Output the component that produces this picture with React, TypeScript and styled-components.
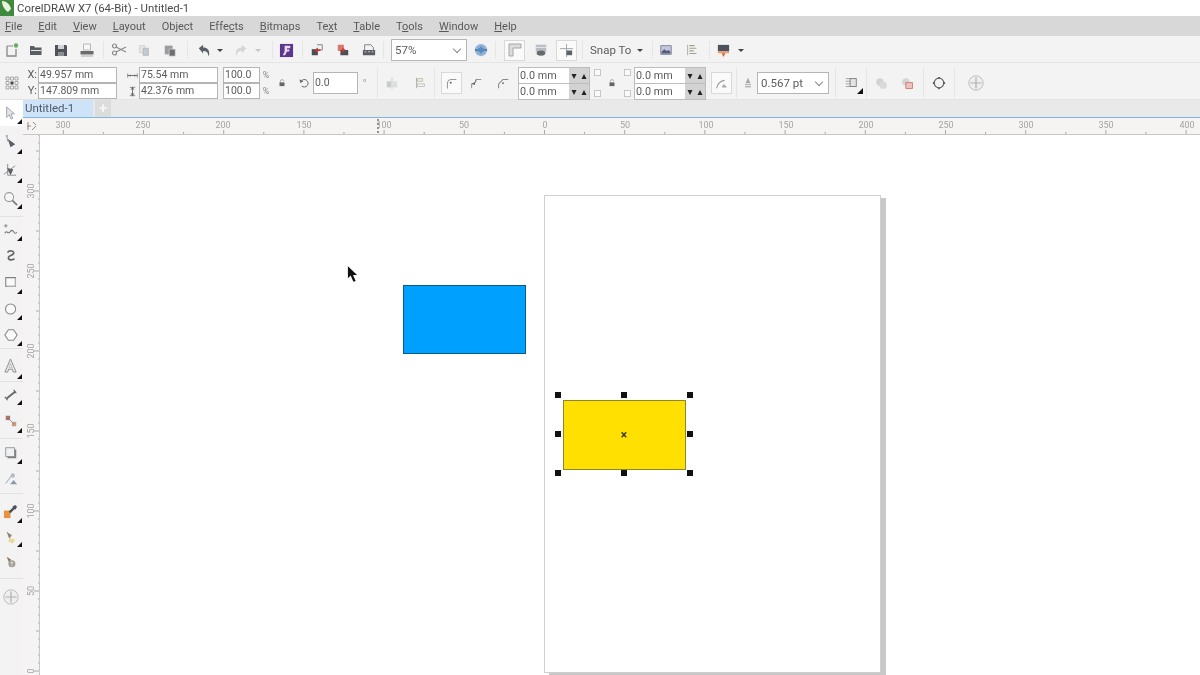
import React from 'react'
import styled, { createGlobalStyle } from 'styled-components'

const GlobalStyle = createGlobalStyle`
  html, body { margin: 0; padding: 0; background: #fff; }
  body { font-family: Roboto, "Noto Sans", "Liberation Sans", sans-serif; overflow: hidden; }
`

type IconProps = { children: React.ReactNode; s?: number }
const Ico = ({ children, s = 16 }: IconProps) => (
  <svg width={s} height={s} viewBox="0 0 16 16" fill="none">{children}</svg>
)

const icons: Record<string, React.ReactNode> = {
  new: <><path d="M3 4v10h9V7" stroke="#888" strokeWidth="1.3" /><path d="M3 4h6" stroke="#888" /><circle cx="12" cy="3.5" r="2.2" fill="#6bab66" /></>,
  open: <><path d="M2 4h4l1 1.5h6.500V13H2z" fill="#5a5d63" /><path d="M3 8h10v1H3z" fill="#e8e8e8" /></>,
  save: <><path d="M2 3h11l1 1v10H2z" fill="#50535a" /><path d="M5 3h6v4H5z" fill="#cfd3d8" /><path d="M5 10h6v4H5z" fill="#8b8f96" /></>,
  print: <><path d="M4.500 2h7v6h-7z" fill="#f7f7f7" stroke="#aaa" strokeWidth=".8" /><path d="M1.500 9h13v3.500h-13z" fill="#6a6a6c" /><path d="M2 14h12" stroke="#aaa" /></>,
  cut: <><circle cx="3.500" cy="4" r="2" stroke="#8a8a8a" strokeWidth="1.200" /><circle cx="3.500" cy="11" r="2" stroke="#8a8a8a" strokeWidth="1.200" /><path d="M5 5l10 5M5 10l10-5" stroke="#8a8a8a" strokeWidth="1.200" /></>,
  copy: <><path d="M3 3h6v8H3z" fill="#e7e7e7" stroke="#cfcfcf" /><path d="M7 6h6v8H7z" fill="#c4cbd0" stroke="#b0b6bb" /></>,
  paste: <><path d="M2 3h9v10H2z" fill="#9c9c9c" /><path d="M7 7h7v8H7z" fill="#6c6e72" stroke="#ddd" strokeWidth=".8" /></>,
  undo: <path d="M2 6l5-4v3c4 0 7 2 7 7 0 2-1 3-1 3 0-4-2-6-6-6v3z" fill="#5c6066" />,
  redo: <path d="M14 6L9 2v3C5 5 2 7 2 12c0 2 1 3 1 3 0-4 2-6 6-6v3z" fill="#d5d7da" />,
  connect: <><path d="M1 1h14v14H1z" fill="#5b368f" /><path d="M6 3h6v2.500H8.500V7H11v2H8.500l-2 4H4l2-4z" fill="#f0d9e6" /></>,
  importDoc: <><path d="M2 7h7v7H2z" fill="#4b4f55" /><path d="M8 2h6v6H8" stroke="#777" /><path d="M5 8l4-3v2h3v2H9v2z" fill="#c9392f" /></>,
  exportDoc: <><path d="M2 2h7v7H2z" fill="#d9776d" /><path d="M5 8h9v6H5z" fill="#4b4f55" /><path d="M7 5l4 3-4 3z" fill="#d9352b" /></>,
  pdf: <><path d="M3 2h7l3 3v4H3z" fill="#f2f2f2" stroke="#777" /><path d="M1 8h14v6H1z" fill="#5a5e64" /><path d="M3 10h2M7 10h2M11 10h2" stroke="#ddd" /></>,
  launcher: <><circle cx="8" cy="8" r="7" fill="#8fb4d8" /><path d="M1 8h14" stroke="#39659a" strokeWidth="1.400" /><path d="M8 4v8" stroke="#39659a" /><rect x="5" y="5.500" width="6" height="5" fill="#5b8cc0" /></>,
  rulers: <><path d="M2 2h12v4H6v8H2z" fill="#dcdcdc" stroke="#a5a5a5" /></>,
  page: <><path d="M2 2h12v8H2z" fill="#b8bcc3" /><path d="M2 5h12" stroke="#eee" /><ellipse cx="8" cy="11.500" rx="5" ry="3" fill="#66696d" /></>,
  guides: <><path d="M8 1v14M1 6h14" stroke="#9da4aa" /><rect x="8" y="8" width="6" height="5" fill="#5e6369" /></>,
  screen: <><path d="M2 3h12v10H2z" fill="#c4c6dd" stroke="#7b7f96" /><path d="M3 10l3-3 3 2 2-1 2 2v2H3z" fill="#565b78" /></>,
  list: <><path d="M3 2v12" stroke="#a5a5a5" /><path d="M5 3h6M5 6h8M5 9h5M5 12h8" stroke="#9aa488" strokeWidth="1.300" /></>,
  monitor: <><path d="M2 2h12v7H2z" fill="#4e5159" /><path d="M2 9h12v2H2z" fill="#e9a06e" /><path d="M6 11h4l-2 4z" fill="#d8622c" /></>,
  position: <><path d="M2 2h3v3H2zM6.500 2h3v3h-3zM11 2h3v3h-3zM2 6.500h3v3H2zM11 6.500h3v3h-3zM2 11h3v3H2zM6.500 11h3v3h-3zM11 11h3v3h-3z" stroke="#a0a0a0" strokeWidth=".9" /><rect x="6.500" y="6.500" width="3" height="3" fill="#444" /></>,
  sizeW: <><path d="M1 8h14" stroke="#666" strokeWidth="1.300" /><path d="M1 5v6M15 5v6" stroke="#666" /><path d="M3 8l2-2v4zM13 8l-2-2v4z" fill="#666" /></>,
  sizeH: <><path d="M8 1v14" stroke="#666" strokeWidth="1.300" /><path d="M4 2h8M4 14h8" stroke="#666" /><path d="M8 2l3 3H5zM8 14l3-3H5z" fill="#666" /></>,
  lock: <><path d="M4 7h8v6H4z" fill="#666" /><path d="M5.500 7V5a2.500 2.500 0 0 1 5 0" stroke="#888" /></>,
  rotate: <><path d="M4 6a5 5 0 1 1 1 6" stroke="#666" strokeWidth="1.300" /><path d="M2 3l1 5 4-2z" fill="#666" /></>,
  mirrorH: <><path d="M2 6h5v7H2z" fill="#c9cdc9" /><path d="M9 6h5v7H9z" fill="#dcdfdc" /><path d="M8 2v13" stroke="#c8c8c8" /></>,
  mirrorV: <><path d="M4 2v12" stroke="#aaa" /><path d="M5 3h6v3H5z" stroke="#b2baa6" /><path d="M5 9h8v3H5z" stroke="#bcbcbc" /></>,
  cornerRound: <><path d="M3 14V8a5 5 0 0 1 5-5h6" stroke="#999" strokeWidth="1.300" /><rect x="6" y="6" width="2" height="2" fill="#555" /></>,
  cornerScallop: <><path d="M3 14V9M8 4h6" stroke="#888" /><path d="M3 9a5 5 0 0 0 5-5" stroke="#666" strokeWidth="1.300" /><circle cx="6" cy="9" r="1" fill="#555" /></>,
  cornerChamfer: <><path d="M3 14V9l5-5h6" stroke="#888" strokeWidth="1.200" /><circle cx="8" cy="8" r="1" fill="#555" /></>,
  cornerScale: <><path d="M2 14a10 10 0 0 1 9-9" stroke="#999" strokeWidth="1.400" /><path d="M8 12l2-3 4 4H8z" fill="#aaa" /></>,
  pen: <><path d="M8 1l3 7H5z" fill="#a5a5a5" /><path d="M4 9h8v2H4zM4 12h8v2H4z" fill="#bbb" /></>,
  textWrap: <><path d="M2 3h5M2 6h5M2 9h5M2 12h5" stroke="#999" /><rect x="7" y="3" width="7" height="9" fill="#e4e4e4" stroke="#777" /></>,
  backFront: <><circle cx="6" cy="6" r="4.500" fill="#d3d3d3" /><circle cx="10" cy="10" r="4.500" fill="#d9d9d9" /></>,
  trim: <><circle cx="6" cy="6" r="4.500" fill="#d5d5d5" /><rect x="6" y="7" width="8" height="7" fill="#eec4c0" stroke="#cc6a60" /></>,
  outline: <><circle cx="8" cy="8" r="5.500" stroke="#666" strokeWidth="1.400" /><path d="M8 1v2M8 13v2M1 8h2M13 8h2" stroke="#444" strokeWidth="1.600" /></>,
  plus: <><circle cx="8" cy="8" r="7.200" fill="#eee" stroke="#b9b9b9" strokeWidth=".9" /><path d="M8 2.500v11M2.500 8h11" stroke="#b0b0b0" strokeWidth="1.200" /></>,
  pick: <path d="M3 1l9 8H8l2 5-2 1-2-5-3 3z" fill="#e4e6e8" stroke="#9aa0a8" />,
  shape: <><path d="M4 1l1 7" stroke="#999" /><path d="M5 5l8 6-5 3z" fill="#5a5e66" /><circle cx="4" cy="2" r="1" fill="#999" /></>,
  crop: <><path d="M1 12L13 3" stroke="#80858b" /><path d="M4 5l7 2-3 6z" fill="#5a5e64" /><path d="M5 1v12h9" stroke="#888" /></>,
  zoom: <><circle cx="6.500" cy="6.500" r="4.800" fill="#f6f6f6" stroke="#9d9d9d" strokeWidth="1.200" /><path d="M10 10l5 5" stroke="#7a7a7a" strokeWidth="1.800" /></>,
  freehand: <><path d="M3 1v4M1 3h4" stroke="#888" /><path d="M2 11c2-4 3 1 5-1s2-3 4-1 1 3 4 1" stroke="#777" strokeWidth="1.200" /></>,
  artistic: <path d="M4 4c2-3 8-2 7 1s-6 2-6 5 5 3 7 1" stroke="#666" strokeWidth="1.900" />,
  rect: <><path d="M2 3h11v10H2z" fill="#fafafa" stroke="#808080" strokeWidth="1.200" /><path d="M3 13h10V4" stroke="#bbb" /></>,
  ellipse: <><circle cx="7.500" cy="8" r="5.800" fill="#fafafa" stroke="#888" strokeWidth="1.200" /></>,
  polygon: <path d="M5 2h6l4 6-4 6H5L1 8z" fill="#fafafa" stroke="#888" strokeWidth="1.200" />,
  textA: <><path d="M8 1l6 14h-3l-1-3H6l-1 3H2z" fill="#e9e9e9" stroke="#8b8b8b" /><path d="M6.500 10h3L8 6z" fill="#fff" stroke="#999" strokeWidth=".6" /></>,
  dimension: <><path d="M3 12L13 4" stroke="#666" strokeWidth="2" /><path d="M1 10l3 4M11 2l3 4" stroke="#666" strokeWidth="1.400" /></>,
  connector: <><rect x="2" y="2" width="5" height="5" fill="#a8746a" /><rect x="9" y="9" width="5" height="5" fill="#c69a7c" /><path d="M6 6l5 5" stroke="#888" /></>,
  shadow: <><rect x="4" y="4" width="10" height="10" fill="#7f7f7f" /><rect x="2" y="2" width="10" height="10" fill="#eef0f2" stroke="#909090" /></>,
  transparency: <><path d="M2 13l7-9" stroke="#8a9aa8" /><circle cx="10" cy="4" r="2.500" fill="#b6bcc2" /><path d="M11 9l4 5H7z" fill="#8d9aa6" /></>,
  eyedropper: <><rect x="1" y="7" width="7" height="8" fill="#e8923e" /><path d="M7 9l6-6" stroke="#4c5056" strokeWidth="2.500" /><path d="M10 3l3 3 2-3-2-2z" fill="#4c5056" /></>,
  fill: <><path d="M3 2l6 4-3 4z" fill="#8e8578" /><path d="M6 9l7 2-3 4-5-2z" fill="#e9d893" /></>,
  smartFill: <><path d="M3 2l5 3-2 4z" fill="#8d7560" /><circle cx="9" cy="10" r="4" fill="#a39a90" /><path d="M7 9h4M9 7v6" stroke="#ddd" /></>,
}

const App = () => (
  <Screen>
    <GlobalStyle />
    <TitleBar>
      <Logo viewBox="0 0 14 16">
        <path d="M0 0h14v16H0z" fill="#3f8a3c" />
        <path d="M2 1c4 0 8 3 9 8l-3 3C5 10 2 6 2 1z" fill="#e9f3df" />
      </Logo>
      CorelDRAW X7 (64-Bit) - Untitled-1
    </TitleBar>

    <MenuBar>
      <MenuItem><u>F</u>ile</MenuItem>
      <MenuItem><u>E</u>dit</MenuItem>
      <MenuItem><u>V</u>iew</MenuItem>
      <MenuItem><u>L</u>ayout</MenuItem>
      <MenuItem>Ob<u>j</u>ect</MenuItem>
      <MenuItem>Effe<u>c</u>ts</MenuItem>
      <MenuItem><u>B</u>itmaps</MenuItem>
      <MenuItem>Te<u>x</u>t</MenuItem>
      <MenuItem><u>T</u>able</MenuItem>
      <MenuItem>T<u>o</u>ols</MenuItem>
      <MenuItem><u>W</u>indow</MenuItem>
      <MenuItem><u>H</u>elp</MenuItem>
    </MenuBar>

    <StandardBar>
      <Cell $w={23}><Ico>{icons.new}</Ico></Cell>
      <Cell $w={25}><Ico>{icons.open}</Ico></Cell>
      <Cell $w={25}><Ico>{icons.save}</Ico></Cell>
      <Cell $w={27}><Ico>{icons.print}</Ico></Cell>
      <Sep $l={3} $r={3} />
      <Cell $w={24}><Ico>{icons.cut}</Ico></Cell>
      <Cell $w={26}><Ico s={14}>{icons.copy}</Ico></Cell>
      <Cell $w={26}><Ico s={14}>{icons.paste}</Ico></Cell>
      <Sep $l={4} $r={4} />
      <Cell $w={24}><Ico s={14}>{icons.undo}</Ico></Cell>
      <Caret />
      <Cell $w={26} $l={4}><Ico s={14}>{icons.redo}</Ico></Cell>
      <Caret $light />
      <Sep $l={10} $r={2} />
      <Cell $w={22}><Ico s={15}>{icons.connect}</Ico></Cell>
      <Sep $l={5} $r={2} />
      <Cell $w={24}><Ico s={14}>{icons.importDoc}</Ico></Cell>
      <Cell $w={27}><Ico s={14}>{icons.exportDoc}</Ico></Cell>
      <Cell $w={26}><Ico s={14}>{icons.pdf}</Ico></Cell>
      <Sep $l={1} $r={7} />
      <Select $w={76}>57%<Chevron /></Select>
      <Cell $w={28}><Ico s={14}>{icons.launcher}</Ico></Cell>
      <Sep $l={0} $r={8} />
      <Toggle><Ico>{icons.rulers}</Ico></Toggle>
      <Cell $w={31}><Ico s={14}>{icons.page}</Ico></Cell>
      <Toggle><Ico s={15}>{icons.guides}</Ico></Toggle>
      <Sep $l={5} $r={7} />
      <SnapLabel>Snap To</SnapLabel>
      <Cell $w={20}><Caret /></Cell>
      <Sep $l={2} $r={0} />
      <Cell $w={26}><Ico s={14}>{icons.screen}</Ico></Cell>
      <Cell $w={26}><Ico s={14}>{icons.list}</Ico></Cell>
      <Sep $l={4} $r={0} />
      <Cell $w={27}><Ico s={15}>{icons.monitor}</Ico></Cell>
      <Caret />
    </StandardBar>

    <PropertyBar>
      <Cell $w={23}><Ico>{icons.position}</Ico></Cell>
      <AxisColumn><span>X:</span><span>Y:</span></AxisColumn>
      <FieldStack $w={79}>
        <Field>49.957 mm</Field>
        <Field>147.809 mm</Field>
      </FieldStack>
      <SizeIcons>
        <Ico s={11}>{icons.sizeW}</Ico>
        <Ico s={11}>{icons.sizeH}</Ico>
      </SizeIcons>
      <FieldStack $w={79}>
        <Field>75.54 mm</Field>
        <Field>42.376 mm</Field>
      </FieldStack>
      <FieldStack $w={37} $l={5}>
        <Field>100.0</Field>
        <Field>100.0</Field>
      </FieldStack>
      <Unit><span>%</span><span>%</span></Unit>
      <Cell $w={20}><Ico s={10}>{icons.lock}</Ico></Cell>
      <Cell $w={18} $l={3}><Ico s={12}>{icons.rotate}</Ico></Cell>
      <SingleField $w={45}>0.0</SingleField>
      <Degree>°</Degree>
      <Sep $l={6} $r={1} $tall />
      <Cell $w={26}><Ico s={14}>{icons.mirrorH}</Ico></Cell>
      <Cell $w={29}><Ico s={14}>{icons.mirrorV}</Ico></Cell>
      <Sep $l={0} $r={6} $tall />
      <Toggle $h={22}><Ico s={13}>{icons.cornerRound}</Ico></Toggle>
      <Cell $w={28}><Ico s={14}>{icons.cornerScallop}</Ico></Cell>
      <Cell $w={26}><Ico s={14}>{icons.cornerChamfer}</Ico></Cell>
      <SpinnerGroup $l={2}>
        <SpinnerRow>0.0 mm<Spin>▾</Spin><Spin>▴</Spin></SpinnerRow>
        <SpinnerRow>0.0 mm<Spin>▾</Spin><Spin>▴</Spin></SpinnerRow>
      </SpinnerGroup>
      <CornerMarks><Mark /><Mark /></CornerMarks>
      <Cell $w={16}><Ico s={10}>{icons.lock}</Ico></Cell>
      <CornerMarks><Mark /><Mark /></CornerMarks>
      <SpinnerGroup>
        <SpinnerRow>0.0 mm<Spin>▾</Spin><Spin>▴</Spin></SpinnerRow>
        <SpinnerRow>0.0 mm<Spin>▾</Spin><Spin>▴</Spin></SpinnerRow>
      </SpinnerGroup>
      <Toggle $h={22} $l={5}><Ico s={14}>{icons.cornerScale}</Ico></Toggle>
      <Sep $l={4} $r={2} $tall />
      <Cell $w={18}><Ico s={12}>{icons.pen}</Ico></Cell>
      <Select $w={72} $h={22}>0.567 pt<Chevron /></Select>
      <Sep $l={6} $r={2} $tall />
      <Cell $w={26}><Flyout><Ico s={14}>{icons.textWrap}</Ico></Flyout></Cell>
      <Sep $l={2} $r={2} $tall />
      <Cell $w={25}><Ico s={13}>{icons.backFront}</Ico></Cell>
      <Cell $w={27}><Ico s={13}>{icons.trim}</Ico></Cell>
      <Sep $l={2} $r={0} $tall />
      <Cell $w={30}><Ico s={14}>{icons.outline}</Ico></Cell>
      <Sep $l={0} $r={0} $tall />
      <Cell $w={41}><Ico>{icons.plus}</Ico></Cell>
    </PropertyBar>

    <Main>
      <Toolbox>
        <Tool $h={26} $active $flyout><Ico s={14}>{icons.pick}</Ico></Tool>
        <Tool $h={30} $flyout><Ico s={15}>{icons.shape}</Ico></Tool>
        <Tool $h={29} $flyout><Ico s={15}>{icons.crop}</Ico></Tool>
        <Tool $h={26} $flyout><Ico s={15}>{icons.zoom}</Ico></Tool>
        <ToolSep $t={5} />
        <Tool $h={26} $flyout><Ico s={15}>{icons.freehand}</Ico></Tool>
        <Tool $h={25}><Ico s={14}>{icons.artistic}</Ico></Tool>
        <Tool $h={28} $flyout><Ico s={14}>{icons.rect}</Ico></Tool>
        <Tool $h={26} $flyout><Ico s={14}>{icons.ellipse}</Ico></Tool>
        <Tool $h={26} $flyout><Ico s={14}>{icons.polygon}</Ico></Tool>
        <ToolSep />
        <Tool $h={32} $flyout><Ico s={15}>{icons.textA}</Ico></Tool>
        <ToolSep />
        <Tool $h={25} $flyout><Ico s={14}>{icons.dimension}</Ico></Tool>
        <Tool $h={28} $flyout><Ico s={14}>{icons.connector}</Ico></Tool>
        <ToolSep $t={3} />
        <Tool $h={27} $flyout><Ico s={14}>{icons.shadow}</Ico></Tool>
        <Tool $h={26}><Ico s={14}>{icons.transparency}</Ico></Tool>
        <ToolSep $t={1} />
        <Tool $h={28} $t={3} $flyout><Ico s={15}>{icons.eyedropper}</Ico></Tool>
        <Tool $h={24} $flyout><Ico s={14}>{icons.fill}</Ico></Tool>
        <Tool $h={26}><Ico s={14}>{icons.smartFill}</Ico></Tool>
        <ToolSep $t={3} />
        <Tool $h={36}><Ico>{icons.plus}</Ico></Tool>
      </Toolbox>

      <Workspace>
        <DocTabs>
          <DocTab>Untitled-1</DocTab>
          <AddTab>+</AddTab>
        </DocTabs>
        <TopRuler>
          <RulerCorner>
            <svg width="10" height="10" viewBox="0 0 10 10">
              <path d="M1 1v8M0 5h4M6 1l3 3M5 9l4-4" stroke="#8a8a8a" fill="none" />
            </svg>
          </RulerCorner>
          <HorizontalScale />
        </TopRuler>
        <CanvasRow>
          <VerticalScale />
          <Canvas>
            <Pointer viewBox="0 0 12 18">
              <path d="M1 0v13l3-3 3 7 2.500-1-3-6.500h4.500z" fill="#111" />
            </Pointer>
            <Page />
            <BlueShape />
            <Selection>
              <Handle $x={0} $y={0} />
              <Handle $x={66} $y={0} />
              <Handle $x={132} $y={0} />
              <Handle $x={0} $y={39} />
              <Handle $x={132} $y={39} />
              <Handle $x={0} $y={78} />
              <Handle $x={66} $y={78} />
              <Handle $x={132} $y={78} />
              <YellowShape />
              <CenterMark>×</CenterMark>
            </Selection>
          </Canvas>
        </CanvasRow>
      </Workspace>
    </Main>
  </Screen>
)

// ruler drawings, x and y are in page pixels so they line up with the labels
const hLabels = [[-300, 63], [-250, 143], [-200, 223], [-150, 304], [-100, 384], [-50, 464], [0, 545], [50, 625], [100, 706], [150, 786], [200, 866], [250, 946], [300, 1026], [350, 1106], [400, 1187]]
const vLabels = [[300, 191], [250, 271], [200, 351], [150, 431], [100, 511], [50, 591], [0, 671]]

const HorizontalScale = () => {
  const ticks: React.ReactNode[] = []
  for (let i = -6; i < 160; i++) {
    const x = 63.300 + i * 8.020
    const len = i % 10 === 0 ? 5 : i % 5 === 0 ? 3 : 1
    ticks.push(<path key={i} d={`M${x} 17V${17 - len}`} stroke="#a9a9a9" />)
  }
  return (
    <ScaleSvg width="1160" height="17" viewBox="40 0 1160 17">
      {ticks}
      <path d="M378 1V17" stroke="#333" strokeDasharray="2 2" />
      {hLabels.map(([n, x]) => (
        <text key={n} x={x} y="10" textAnchor="middle" fontSize="9" fill="#a3a3a3">{Math.abs(n)}</text>
      ))}
    </ScaleSvg>
  )
}

const VerticalScale = () => {
  const ticks: React.ReactNode[] = []
  for (let i = -8; i < 70; i++) {
    const y = 191 + i * 8 - 135
    const len = i % 10 === 0 ? 5 : i % 5 === 0 ? 3 : 1
    ticks.push(<path key={i} d={`M16 ${y}H${16 - len}`} stroke="#a9a9a9" />)
  }
  return (
    <VerticalRuler>
      <ScaleSvg width="17" height="540" viewBox="0 0 17 540">
        {ticks}
        {vLabels.map(([n, y]) => (
          <text key={n} transform={`translate(11 ${y - 135}) rotate(-90)`} textAnchor="middle" fontSize="9" fill="#a3a3a3">{n}</text>
        ))}
      </ScaleSvg>
    </VerticalRuler>
  )
}

const Screen = styled.div`
  width: 1200px;
  height: 675px;
  display: flex;
  flex-direction: column;
  overflow: hidden;
  background: #fff;
  color: #5c5c5c;
  filter: blur(0.45px);
`

const TitleBar = styled.div`
  height: 16px;
  display: flex;
  align-items: center;
  gap: 3px;
  background: #fff;
  font-size: 11.4px;
  color: #4a4a4a;
  flex: none;
`

const Logo = styled.svg`
  width: 14px;
  height: 16px;
`

const MenuBar = styled.div`
  height: 20px;
  flex: none;
  box-sizing: border-box;
  display: flex;
  align-items: center;
  gap: 16px;
  padding: 1px 0 0 5px;
  background: #d8d8d8;
  font-size: 11px;
  color: #595959;
`

const MenuItem = styled.span`
  u { text-underline-offset: 1px; text-decoration-thickness: 1px; }
`

const StandardBar = styled.div`
  height: 26px;
  flex: none;
  box-sizing: border-box;
  padding-top: 2px;
  display: flex;
  align-items: center;
  background: #f3f3f3;
`

const PropertyBar = styled.div`
  height: 38px;
  flex: none;
  box-sizing: border-box;
  display: flex;
  align-items: center;
  padding-top: 4px;
  background: #f3f3f3;
  border-top: 1px solid #e6e6e6;
  border-bottom: 1px solid #e3e3e3;
`

const Cell = styled.div<{ $w: number; $l?: number }>`
  width: ${p => p.$w}px;
  margin-left: ${p => p.$l ?? 0}px;
  flex: none;
  display: flex;
  align-items: center;
  justify-content: center;
`

const Sep = styled.div<{ $l: number; $r: number; $tall?: boolean }>`
  width: 1px;
  height: ${p => (p.$tall ? 30 : 18)}px;
  flex: none;
  margin: 0 ${p => p.$r}px 0 ${p => p.$l}px;
  background: #e6e6e6;
`

const Caret = styled.div<{ $light?: boolean }>`
  width: 8px;
  height: 3px;
  flex: none;
  display: flex;
  justify-content: center;
  &::before {
    content: '';
    border-left: 3px solid transparent;
    border-right: 3px solid transparent;
    border-top: 3px solid ${p => (p.$light ? '#c4c4c4' : '#444')};
  }
`

const Select = styled.div<{ $w: number; $h?: number }>`
  width: ${p => p.$w}px;
  height: ${p => p.$h ?? 22}px;
  flex: none;
  box-sizing: border-box;
  display: flex;
  align-items: center;
  justify-content: space-between;
  padding: 0 6px 0 3px;
  background: #fff;
  border: 1px solid #b5b5b5;
  font-size: 11.5px;
`

const Chevron = styled.i`
  width: 5px;
  height: 5px;
  margin-bottom: 3px;
  border-right: 1px solid #888;
  border-bottom: 1px solid #888;
  transform: rotate(45deg);
`

const Toggle = styled.div<{ $h?: number; $l?: number }>`
  width: 21px;
  height: ${p => p.$h ?? 21}px;
  margin-left: ${p => p.$l ?? 0}px;
  flex: none;
  box-sizing: border-box;
  display: flex;
  align-items: center;
  justify-content: center;
  background: #fafafa;
  border: 1px solid #d9d9d9;
`

const SnapLabel = styled.span`
  width: 40px;
  flex: none;
  font-size: 11.5px;
  white-space: nowrap;
`

const AxisColumn = styled.div`
  width: 15px;
  flex: none;
  display: flex;
  flex-direction: column;
  align-items: flex-end;
  padding-right: 1px;
  box-sizing: border-box;
  font-size: 11px;
  line-height: 16px;
`

const SizeIcons = styled.div`
  width: 14px;
  margin-left: 8px;
  flex: none;
  display: flex;
  flex-direction: column;
  align-items: center;
  gap: 5px;
`

const FieldStack = styled.div<{ $w: number; $l?: number }>`
  width: ${p => p.$w}px;
  margin-left: ${p => p.$l ?? 0}px;
  flex: none;
  display: flex;
  flex-direction: column;
`

const Field = styled.div`
  height: 16px;
  box-sizing: border-box;
  padding-left: 1px;
  background: #fff;
  border: 1px solid #b5b5b5;
  font-size: 10.5px;
  line-height: 14px;
  white-space: nowrap;
  overflow: hidden;
`

const Unit = styled.div`
  width: 12px;
  flex: none;
  display: flex;
  flex-direction: column;
  align-items: center;
  font-size: 9px;
  line-height: 16px;
  color: #888;
`

const SingleField = styled.div<{ $w: number }>`
  width: ${p => p.$w}px;
  height: 22px;
  flex: none;
  box-sizing: border-box;
  padding-left: 1px;
  background: #fff;
  border: 1px solid #b5b5b5;
  font-size: 10.5px;
  line-height: 20px;
`

const Degree = styled.span`
  width: 13px;
  flex: none;
  text-align: center;
  font-size: 10px;
  color: #999;
`

const SpinnerGroup = styled.div<{ $l?: number }>`
  width: 72px;
  margin-left: ${p => p.$l ?? 0}px;
  flex: none;
  box-sizing: border-box;
  display: flex;
  flex-direction: column;
  gap: 1px;
  background: #bdbdbd;
  border: 1px solid #bdbdbd;
`

const SpinnerRow = styled.div`
  height: 15px;
  display: flex;
  align-items: center;
  padding-left: 1px;
  background: #fff;
  font-size: 10.8px;
  white-space: nowrap;
`

const Spin = styled.span`
  width: 10px;
  height: 15px;
  flex: none;
  background: #d2d2d2;
  color: #222;
  font-size: 10px;
  line-height: 15px;
  text-align: center;
  font-family: "DejaVu Sans", sans-serif;
  &:first-of-type { margin-left: auto; }
`

const CornerMarks = styled.div`
  width: 14px;
  flex: none;
  display: flex;
  flex-direction: column;
  align-items: center;
  gap: 14px;
`

const Mark = styled.i`
  width: 7px;
  height: 7px;
  box-sizing: border-box;
  background: #fafafa;
  border: 1px solid #c6c6c6;
`

const Flyout = styled.div`
  position: relative;
  display: flex;
  &::after {
    content: '';
    position: absolute;
    right: -5px;
    bottom: -4px;
    border-left: 6px solid transparent;
    border-bottom: 6px solid #111;
  }
`

const Main = styled.div`
  flex: 1;
  min-height: 0;
  display: flex;
`

const Toolbox = styled.div`
  width: 23px;
  flex: none;
  display: flex;
  flex-direction: column;
  background: #f3f3f3;
`

const Tool = styled.div<{ $h: number; $t?: number; $active?: boolean; $flyout?: boolean }>`
  position: relative;
  height: ${p => p.$h}px;
  margin-top: ${p => p.$t ?? 0}px;
  padding-right: 2px;
  flex: none;
  display: flex;
  align-items: center;
  justify-content: center;
  background: ${p => (p.$active ? '#fff' : 'transparent')};
  &::after {
    content: '';
    display: ${p => (p.$flyout ? 'block' : 'none')};
    position: absolute;
    right: 1px;
    bottom: 2px;
    border-left: 5px solid transparent;
    border-bottom: 5px solid #111;
  }
`

const ToolSep = styled.div<{ $t?: number }>`
  height: 1px;
  flex: none;
  margin-top: ${p => p.$t ?? 0}px;
  background: #e2e2e2;
`

const Workspace = styled.div`
  flex: 1;
  min-width: 0;
  display: flex;
  flex-direction: column;
`

const DocTabs = styled.div`
  height: 18px;
  flex: none;
  box-sizing: border-box;
  display: flex;
  align-items: stretch;
  gap: 2px;
  background: #e9e9e9;
  border-bottom: 1px solid #7fb6de;
`

const DocTab = styled.div`
  width: 68px;
  padding-left: 2px;
  background: #cfe3f8;
  color: #4c5a68;
  font-size: 11.5px;
  line-height: 17px;
`

const AddTab = styled.div`
  width: 16px;
  background: #dcdcdc;
  color: #f5f5f5;
  font-size: 15px;
  font-weight: 700;
  line-height: 16px;
  text-align: center;
`

const TopRuler = styled.div`
  height: 17px;
  flex: none;
  box-sizing: border-box;
  display: flex;
  overflow: hidden;
  background: #f6f4f2;
  border-bottom: 1px solid #c6c6c6;
`

const RulerCorner = styled.div`
  width: 17px;
  flex: none;
  display: flex;
  align-items: center;
  justify-content: center;
`

const ScaleSvg = styled.svg`
  display: block;
  flex: none;
  font-family: Roboto, "Noto Sans", sans-serif;
`

const CanvasRow = styled.div`
  flex: 1;
  min-height: 0;
  display: flex;
`

const VerticalRuler = styled.div`
  width: 17px;
  flex: none;
  box-sizing: border-box;
  overflow: hidden;
  background: #f6f4f2;
  border-right: 1px solid #c6c6c6;
`

const Canvas = styled.div`
  position: relative;
  flex: 1;
  overflow: hidden;
  background: #fff;
`

const Pointer = styled.svg`
  position: absolute;
  left: 307px;
  top: 131px;
  width: 11px;
  height: 17px;
`

const Page = styled.div`
  position: absolute;
  left: 504px;
  top: 60px;
  width: 337px;
  height: 478px;
  box-sizing: border-box;
  background: #fff;
  border: 1px solid #cfcfcf;
  box-shadow: 5px 3px 0 #c8c8c8;
`

const BlueShape = styled.div`
  position: absolute;
  left: 363px;
  top: 150px;
  width: 123px;
  height: 69px;
  box-sizing: border-box;
  background: #00a0ff;
  border: 1px solid #0a5a90;
`

const Selection = styled.div`
  position: absolute;
  left: 518px;
  top: 260px;
  width: 132px;
  height: 78px;
`

const YellowShape = styled.div`
  position: absolute;
  left: 5px;
  top: 5px;
  width: 123px;
  height: 70px;
  box-sizing: border-box;
  background: #ffe000;
  border: 1px solid #8d8530;
`

const Handle = styled.i<{ $x: number; $y: number }>`
  position: absolute;
  left: ${p => p.$x - 3}px;
  top: ${p => p.$y - 3}px;
  width: 6px;
  height: 6px;
  background: #111;
`

const CenterMark = styled.span`
  position: absolute;
  left: 61px;
  top: 33px;
  width: 10px;
  height: 14px;
  color: #333;
  font-size: 12px;
  font-weight: 700;
  line-height: 14px;
  text-align: center;
`

export default App
